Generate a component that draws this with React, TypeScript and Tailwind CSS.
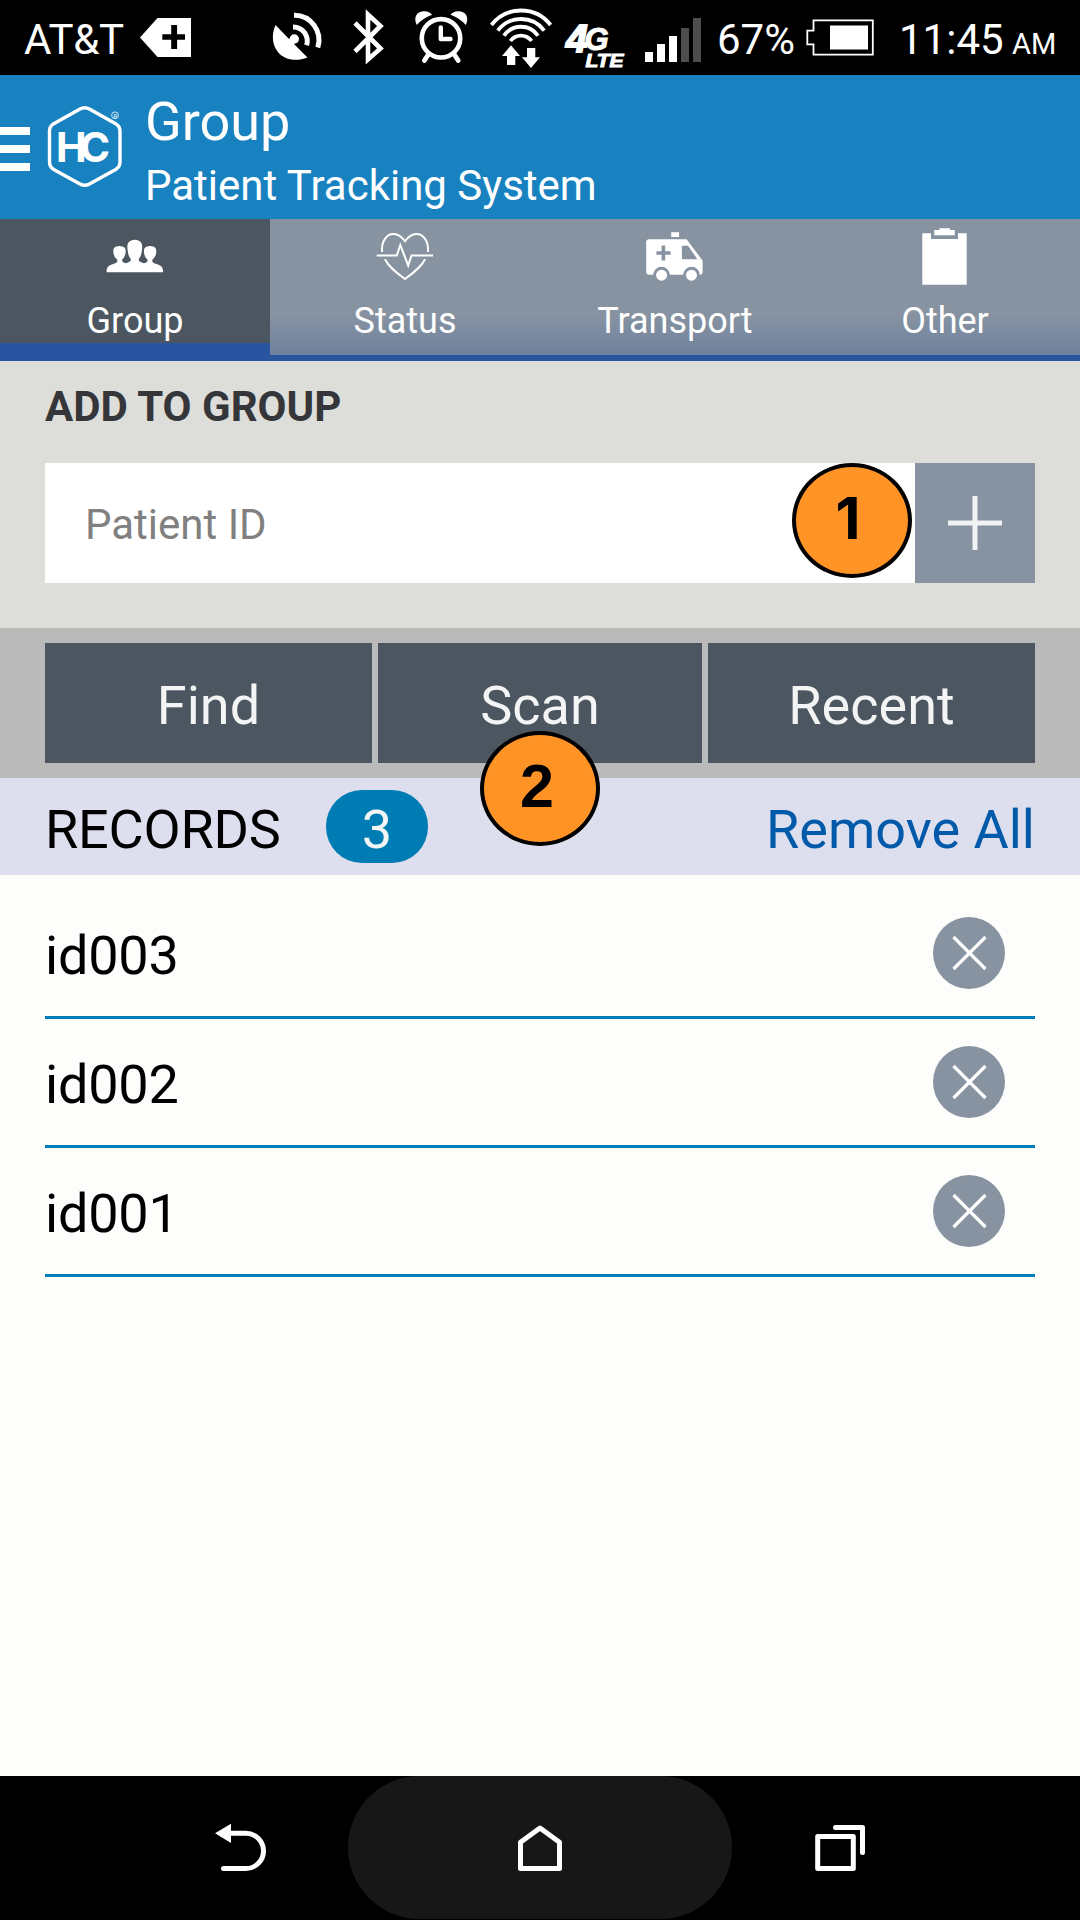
import React from "react";

const HEX =
  "M80 109 Q84.7 106.4 89.4 109 L115.7 123.7 Q120 126.2 120 131 L120 162 Q120 167 115.7 169.4 L89.4 184 Q84.7 186.6 80 184 L53.7 169.4 Q49.5 167 49.5 162 L49.5 131 Q49.5 126.2 53.7 123.7 Z";

function StatusBar() {
  return (
    <div className="flex h-[75px] items-start bg-black text-[42px] leading-[79px] whitespace-pre text-white">
      <span className="w-[136px] pl-[24px] tracking-[-0.3px]">AT&amp;T</span>
      <svg className="w-[126px] h-[75px] shrink-0" viewBox="136 0 126 75" fill="#fff">
        <path d="M140 37.5 L157.5 18 H191 V57 H157.5 Z" />
        <path d="M162.3 34.3h8.9v-9.3h5.9v9.3h7.9v5.4h-7.9v9.3h-5.9v-9.3h-8.9z" fill="#000" />
      </svg>
      <svg className="w-[78px] h-[75px] shrink-0" viewBox="262 0 78 75" fill="none" stroke="#fff" strokeWidth="5">
        <path stroke="none" fill="#fff" d="M275.5 25 L291 41 L293 43 L307.5 57.5 C296 62 284 60 277.5 51.5 C272 44 271.5 34 275.5 25Z" />
        <circle cx="294.3" cy="39" r="4.7" fill="#fff" stroke="none" />
        <path d="M292 41 L288 45" strokeWidth="7" />
        <path d="M293 27 A14 14 0 0 1 306.6 45.2" />
        <path d="M294 15.3 A24.7 24.7 0 0 1 317.8 47.4" />
      </svg>
      <svg className="w-[62px] h-[75px] shrink-0" viewBox="340 0 62 75" fill="none" stroke="#fff" strokeWidth="4.6">
        <path d="M355 23 L380.5 48.5 L368 59.5 V14.5 L380.5 26 L355 51.5" />
      </svg>
      <svg className="w-[80px] h-[75px] shrink-0" viewBox="402 0 80 75" fill="none" stroke="#fff">
        <circle cx="441" cy="38.3" r="19.2" strokeWidth="4.6" />
        <path d="M440.8 27.5 V39 H450.5" strokeWidth="4.4" strokeLinecap="round" strokeLinejoin="round" />
        <path d="M428 55 L424.4 60.5 M454.6 55 L458.2 60.5" strokeWidth="4.8" strokeLinecap="round" />
        <path fill="#fff" stroke="none" d="M416.8 25 C413.8 19 415.5 13 421 11.7 C425.8 10.5 430 11.7 432 14.8 Q422.5 18.5 416.8 25Z M465.8 25 C468.8 19 467.1 13 461.6 11.7 C456.8 10.5 452.6 11.7 450.6 14.8 Q460.1 18.5 465.8 25Z" />
      </svg>
      <svg className="w-[76px] h-[75px] shrink-0" viewBox="482 0 76 75" fill="none" stroke="#fff" strokeWidth="3.8">
        <path d="M491.4 25 A37.5 37.5 0 0 1 550.6 25" />
        <path d="M497.8 30.6 A29 29 0 0 1 544.2 30.6" />
        <path d="M504 35.8 A20.5 20.5 0 0 1 538 35.8" />
        <path d="M510.4 41 A13 13 0 0 1 531.6 41" />
        <path stroke="none" fill="#fff" d="M511 45.3 L520 56 H515.3 V65 H507 V56 H502Z M527 48 H535.3 V57.3 H540 L531 68 L522 57.3 H527Z" />
      </svg>
      <svg
        className="w-[76px] h-[75px] shrink-0 font-['Liberation_Sans']"
        viewBox="558 0 76 75"
        fill="#fff"
        stroke="#fff"
        fontWeight="700"
        fontStyle="italic"
      >
        <text x="566" y="52.3" fontSize="39" strokeWidth="1.8">
          4<tspan x="584.5" y="50" fontSize="31" strokeWidth="1">G</tspan>
        </text>
        <text x="585.5" y="67" fontSize="18.5" strokeWidth="1" textLength="38" lengthAdjust="spacingAndGlyphs">LTE</text>
      </svg>
      <svg className="w-[83px] h-[75px] shrink-0" viewBox="634 0 83 75" fill="#fff">
        <path d="M645 52h8v10h-8z M657 44h8v18h-8z M669 36h8v26h-8z" />
        <path d="M681 28h8v34h-8z M693 18h8v44h-8z" fill="#4d4d4d" />
      </svg>
      <span className="w-[80px]">67%</span>
      <svg className="w-[102px] h-[75px] shrink-0" viewBox="797 0 102 75" fill="none" stroke="#fff" strokeWidth="1.8">
        <path d="M813.5 20.4 H872.8 V54.6 H813.5 V44.4 H807.3 V30.6 H813.5 Z" />
        <path d="M830 25.5h38v24h-38z" fill="#fff" stroke="none" />
      </svg>
      <span className="w-[113px]">11:45</span>
      <span className="text-[29px] leading-[88px]">AM</span>
    </div>
  );
}

function Header() {
  return (
    <div className="flex h-[144px] bg-[#1882c1] text-white">
      <svg className="h-[144px] w-[145px] shrink-0" viewBox="0 75 145 144" fill="#fff">
        <path d="M0 127h30v8H0z M0 145h30v8H0z M0 163h30v8H0z" />
        <path d={HEX} fill="none" stroke="#fff" strokeWidth="3.4" />
        <text className="font-['Inter']" x="56" y="161.6" fontWeight="700" fontSize="41" letterSpacing="-6.8">HC</text>
        <circle cx="115" cy="115.3" r="3.4" fill="none" stroke="#fff" strokeWidth="0.8" />
        <text className="font-['Roboto']" x="113.2" y="117.6" fontSize="6">R</text>
      </svg>
      <div className="flex flex-col pt-[14px]">
        <span className="text-[54px] leading-[65px]">Group</span>
        <span className="text-[42px] leading-[65px] mt-[-1px]">Patient Tracking System</span>
      </div>
    </div>
  );
}

const TABS = [
  {
    label: "Group",
    active: true,
    icon: (
      <svg className="h-[82px] w-[60px]" viewBox="104.5 219 60 82" fill="#fff">
        <path d="M106 273.5 C106 268 108 267 112 265.5 C116 264 117.3 263.5 116.8 261 C114 258.5 113.2 256 113 254.5 C112.4 250.5 113 247.5 119 247.3 C125 247.5 125.6 250.5 125 254.5 C124.8 256 124 258.5 121.6 261 C121.2 263 123 263.6 125 264.5 C129 263 130.8 262.6 130.2 260 C128 257.5 127.4 254 127.2 251.5 C126.2 246.5 127 241.3 134.3 241 C141.6 241.3 142.4 246.5 141.4 251.5 C141.2 254 140.6 257.5 138.4 260 C137.8 262.6 139.6 263 143.6 264.5 C146 263.6 147.4 263 147 261 C144.6 258.5 143.8 256 143.6 254.5 C143 250.5 143.6 247.5 149.6 247.3 C155.6 247.5 156.2 250.5 155.6 254.5 C155.4 256 154.6 258.5 151.8 261 C151.3 263.5 152.6 264 156.6 265.5 C160.6 267 162.6 268 162.6 273.5 Z" transform="translate(0 -1.2)" />
      </svg>
    ),
  },
  {
    label: "Status",
    active: false,
    icon: (
      <svg className="h-[82px] w-[60px]" viewBox="374.5 219 60 82" fill="none" stroke="#fff" strokeWidth="2">
        <path d="M381.6 252 C380.5 241 386.5 234 393 234 C398.5 234 401.5 237 404.5 241.3 C407.5 237 410.5 234 416 234 C422.5 234 428.5 241 427.4 252" />
        <path d="M376.2 255.5 H396.3 L399.8 245 L407.7 265.5 L411 255.5 H432.6" />
        <path d="M384.4 259.3 C389 268 396.5 273 404.5 279 C412.5 273 420 268 424.6 259.3" />
      </svg>
    ),
  },
  {
    label: "Transport",
    active: false,
    icon: (
      <svg className="h-[82px] w-[60px]" viewBox="645 219 60 82" fill="#fff">
        <path d="M671.2 232.2h7.9v4.8h-7.9z" />
        <path d="M648 239.2 H686.6 L702.6 260.7 V272.5 L701.3 274.8 H648 L646.2 273 V241 Z" />
        <path d="M681.9 245.7 H688 L697.4 259.2 H681.9Z M656.4 251.2h5.2v-5.6h3.6v5.6h5.4v3.6h-5.4v5.8h-3.6v-5.8h-5.2z" fill="#8793a1" />
        <path d="M653.2 275 A8.3 8.3 0 0 1 669.8 275Z M683.2 275 A8.3 8.3 0 0 1 699.8 275Z" fill="#8793a1" />
        <circle cx="661.6" cy="275.2" r="5.5" />
        <circle cx="691.5" cy="275.2" r="5.5" />
      </svg>
    ),
  },
  {
    label: "Other",
    active: false,
    icon: (
      <svg className="h-[82px] w-[60px]" viewBox="915 219 60 82" fill="#fff">
        <path d="M922.3 233.2 H931 V239 H958 V233.2 H966.7 V284.8 H922.3Z" />
        <path d="M934.3 230 H939.5 V228.2 H950 V230 H954.8 V235.3 H934.3Z" />
      </svg>
    ),
  },
];

function Tabs() {
  return (
    <div className="grid h-[142px] grid-cols-4 bg-[#29549f]">
      {TABS.map((t) => (
        <div
          key={t.label}
          className={
            t.active
              ? "flex h-[124px] flex-col items-center bg-[#4c5660]"
              : "flex h-[136px] flex-col items-center bg-linear-to-b from-[#8793a1] from-70% to-[#6f819f]"
          }
        >
          {t.icon}
          <span className="text-[36px] leading-[40px] text-white">{t.label}</span>
        </div>
      ))}
    </div>
  );
}

function Marker({ n, className }: { n: number; className: string }) {
  return (
    <div
      className={
        "absolute z-10 flex h-[115px] w-[120px] justify-center rounded-[50%] border-4 border-black bg-[#ff9326] font-bold text-black " +
        className
      }
    >
      {n}
    </div>
  );
}

export default function App() {
  return (
    <div className="flex h-[1920px] w-[1080px] flex-col overflow-hidden bg-[#fdfefc] font-['Roboto',sans-serif]">
      <StatusBar />
      <Header />
      <Tabs />

      <div className="h-[267px] bg-[#ddded9] px-[45px] pt-[16px]">
        <h2 className="h-[86px] text-[42px] leading-[60px] font-bold text-[#35363a]">ADD TO GROUP</h2>
        <div className="relative flex h-[120px]">
          <div className="flex-1 bg-white pl-[40px] text-[42px] leading-[124px] text-[#808080]">Patient ID</div>
          <button className="flex w-[120px] items-center justify-center bg-[#8793a1]">
            <svg className="h-[54px] w-[54px]" viewBox="0 0 54 54" stroke="#f1f2f4" strokeWidth="5">
              <path d="M27 0V54M0 27H54" />
            </svg>
          </button>
          <Marker
            n={1}
            className="top-0 right-[123px] pr-[8px] font-['Inter'] text-[58px] leading-[103px]"
          />
        </div>
      </div>

      <div className="relative grid h-[150px] grid-cols-[327px_324px_327px] gap-x-[6px] bg-[#bababa] px-[45px] py-[15px] text-center text-[54px] leading-[125px] text-[#f3f4f4]">
        <button className="overflow-hidden bg-[#4c5660]">Find</button>
        <button className="overflow-hidden bg-[#4c5660]">Scan</button>
        <button className="overflow-hidden bg-[#4c5660]">Recent</button>
        <Marker
          n={2}
          className="top-[103px] left-[480px] pr-[6px] font-['Liberation_Sans'] text-[61px] leading-[103px]"
        />
      </div>

      <div className="flex h-[97px] items-start bg-[#dddeee] px-[45px] text-[54px] leading-[103px]">
        <span className="w-[281px] tracking-[-0.2px] text-black">RECORDS</span>
        <span className="mt-[12px] h-[73px] w-[102px] rounded-[36px] bg-[#007cb4] text-center leading-[79px] text-[#f3f4f4]">3</span>
        <span className="ml-auto text-[#0059a9]">Remove All</span>
      </div>

      <div className="flex-1 px-[45px] pt-[15px]">
        {["id003", "id002", "id001"].map((id) => (
          <div key={id} className="flex h-[129px] items-start justify-between border-b-[3px] border-[#007fb6] pr-[30px]">
            <span className="text-[54px] leading-[131px] tracking-[-0.2px] text-black">{id}</span>
            <svg className="mt-[27px] h-[72px] w-[72px]" viewBox="0 0 72 72" stroke="#fff" strokeWidth="3.2">
              <circle cx="36" cy="36" r="36" fill="#8793a1" stroke="none" />
              <path d="M20.5 20 L52.5 52 M52.5 20 L20.5 52" />
            </svg>
          </div>
        ))}
      </div>

      <div className="flex h-[144px] items-start justify-center bg-black">
        <svg className="h-[144px] w-[348px]" viewBox="0 1776 348 144" fill="none" stroke="#fff" strokeWidth="5">
          <path d="M229 1833.3 H245.9 A17.6 17.6 0 0 1 245.9 1868.5 H223.5" strokeLinecap="round" />
          <path d="M215 1833.3 L231 1823.8 V1843 Z" fill="#fff" stroke="none" />
        </svg>
        <div className="flex h-[143px] w-[384px] justify-center rounded-full bg-[#171717]">
          <svg className="h-[143px] w-[60px]" viewBox="510 1776 60 143" fill="none" stroke="#fff" strokeWidth="5" strokeLinejoin="round">
            <path d="M520.5 1842.2 L540 1828 L559.5 1842.2 V1868.5 H520.5 Z" />
          </svg>
        </div>
        <svg className="h-[144px] w-[348px]" viewBox="732 1776 348 144" fill="none" stroke="#fff" strokeWidth="5" strokeLinejoin="round" strokeLinecap="round">
          <path d="M817.7 1836.5 H853.3 V1868.5 H817.7 Z M835.5 1827.5 H862.5 V1852.5" />
        </svg>
      </div>
    </div>
  );
}
